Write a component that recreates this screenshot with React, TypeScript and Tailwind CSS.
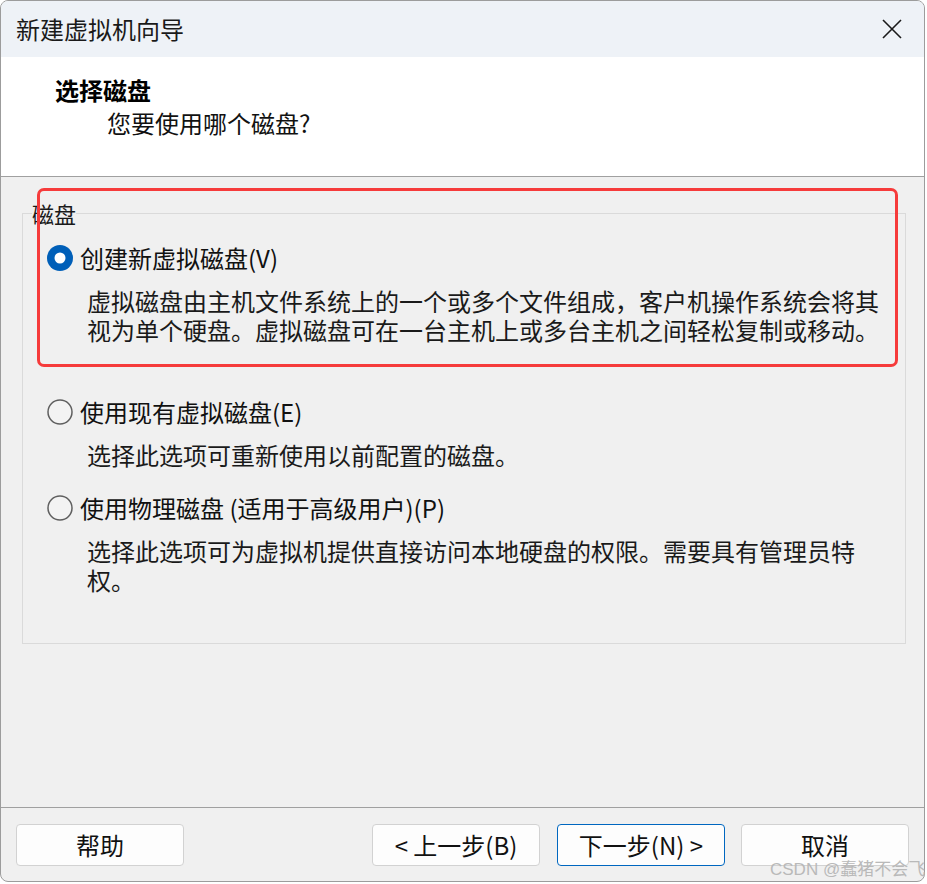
import React from 'react';

const FONT = "font-['Noto_Sans_CJK_SC','Noto_Sans',sans-serif]";

const Radio = ({ checked }: { checked: boolean }) =>
  checked ? (
    <svg width="26" height="26" viewBox="0 0 26 26" className="shrink-0">
      <circle cx="13" cy="13" r="13" fill="#005fb8" />
      <circle cx="13" cy="13" r="5.5" fill="#ffffff" />
    </svg>
  ) : (
    <svg width="26" height="26" viewBox="0 0 26 26" className="shrink-0">
      <circle cx="13" cy="13" r="12" fill="#f3f3f3" stroke="#5f5f5f" strokeWidth="1.5" />
    </svg>
  );

const Option = ({ checked, label }: { checked: boolean; label: string }) => (
  <div className="flex items-center gap-[7px] h-[32px] pl-[24px]">
    <Radio checked={checked} />
    <span className="text-[24px] leading-[32px] text-[#111]">{label}</span>
  </div>
);

const Desc = ({ children, className = '' }: { children: React.ReactNode; className?: string }) => (
  <p className={`pl-[64px] pr-[20px] text-[24px] leading-[29px] text-[#1a1a1a] ${className}`}>{children}</p>
);

const Btn = ({ label, primary = false }: { label: string; primary?: boolean }) => (
  <button
    className={`w-[168px] h-[42px] rounded-[4px] bg-[#fdfdfd] text-[24px] leading-none text-[#111] border ${
      primary ? 'border-[#0067c0]' : 'border-[#d2d2d2]'
    }`}
  >
    {label}
  </button>
);

export default function App() {
  return (
    <div className={`relative w-[927px] h-[884px] bg-white overflow-hidden ${FONT}`}>
      <div className="w-[925px] h-[882px] flex flex-col rounded-[8px] border border-[#9c9c9c] overflow-hidden bg-[#f0f0f0]">
        {/* title bar */}
        <div className="h-[56px] shrink-0 bg-[#eef2f7] flex items-center justify-between pl-[15px] pr-[22px]">
          <span className="text-[24px] leading-none text-[#1a1a1a]">新建虚拟机向导</span>
          <svg width="20" height="20" viewBox="0 0 20 20">
            <path d="M1 1 L19 19 M19 1 L1 19" stroke="#1a1a1a" strokeWidth="1.6" fill="none" />
          </svg>
        </div>

        {/* header */}
        <div className="h-[120px] shrink-0 bg-white border-b border-[#a0a0a0] pl-[54px] pt-[17px]">
          <h1 className="text-[24px] leading-[32px] font-bold text-black">选择磁盘</h1>
          <p className="ml-[52px] mt-[1px] text-[24px] leading-[32px] text-[#111]">您要使用哪个磁盘?</p>
        </div>

        {/* body */}
        <div className="flex-1 pt-[24px] pl-[21px]">
          <fieldset className="w-[884px] h-[443px] border border-[#dadada]">
            <legend className="ml-[9px] text-[22px] leading-[24px] text-[#1a1a1a]">磁盘</legend>
            <div className="mt-[17px]">
              <Option checked label="创建新虚拟磁盘(V)" />
              <Desc className="mt-[12px]">
                虚拟磁盘由主机文件系统上的一个或多个文件组成，客户机操作系统会将其视为单个硬盘。虚拟磁盘可在一台主机上或多台主机之间轻松复制或移动。
              </Desc>
              <div className="mt-[52px]">
                <Option checked={false} label="使用现有虚拟磁盘(E)" />
              </div>
              <Desc className="mt-[12px]">选择此选项可重新使用以前配置的磁盘。</Desc>
              <div className="mt-[23px]">
                <Option checked={false} label="使用物理磁盘 (适用于高级用户)(P)" />
              </div>
              <Desc className="mt-[12px]">
                选择此选项可为虚拟机提供直接访问本地硬盘的权限。需要具有管理员特权。
              </Desc>
            </div>
          </fieldset>
        </div>

        {/* footer */}
        <div className="shrink-0 border-t border-[#a0a0a0] pt-[16px] pb-[15px] pl-[15px] pr-[15px] flex items-center">
          <Btn label="帮助" />
          <div className="flex-1" />
          <Btn label="< 上一步(B)" />
          <div className="w-[17px]" />
          <Btn label="下一步(N) >" primary />
          <div className="w-[16px]" />
          <Btn label="取消" />
        </div>
      </div>

      {/* red annotation box */}
      <div className="absolute left-[37px] top-[188px] w-[861px] h-[179px] border-[3px] border-[#f63b3b] rounded-[7px]" />

      {/* watermark */}
      <span className="absolute left-[770px] top-[858px] text-[17px] leading-[24px] text-[#b9b9b9] font-['Liberation_Sans','Noto_Sans_CJK_SC',sans-serif]">
        CSDN @蠢猪不会飞
      </span>
    </div>
  );
}
